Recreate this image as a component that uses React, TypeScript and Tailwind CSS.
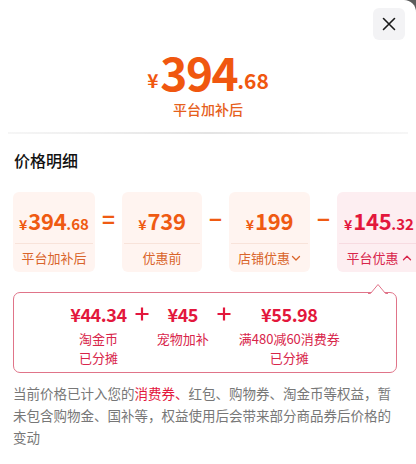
import React from "react";

const font = { fontFamily: '"Noto Sans CJK SC", "Noto Sans", sans-serif' };

function Chevron({ up, className }: { up?: boolean; className?: string }) {
  return (
    <svg viewBox="0 0 10 10" className={className} fill="none" stroke="currentColor" strokeWidth="1.3" strokeLinecap="round" strokeLinejoin="round">
      {up ? <path d="M1.5 6.8 5 3.3l3.5 3.5" /> : <path d="M1.5 3.5 5 7l3.5-3.5" />}
    </svg>
  );
}

interface CardProps {
  int: string;
  dec?: string;
  label: string;
  chevron?: "up" | "down";
  pink?: boolean;
  w: string;
}

function PriceCard({ int, dec, label, chevron, pink, w }: CardProps) {
  return (
    <div className={`${w} shrink-0 h-[80px] rounded-[6px] flex flex-col ${pink ? "bg-[#fdeef1] text-[#e3173c]" : "bg-[#fff4f0] text-[#ef5a12]"}`}>
      <div className="h-[51px] flex items-end justify-center pb-[12px] font-semibold leading-none">
        <span className="text-[14px] mr-[1px]">¥</span>
        <span className="text-[22px] tracking-[-0.3px]">{int}</span>
        {dec ? <span className="text-[15px]">.{dec}</span> : null}
      </div>
      <div className={`h-px mx-[2px] ${pink ? "bg-[#f7dbe1]" : "bg-[#f8e3da]"}`} />
      <div className={`flex-1 flex items-center justify-center text-[13px] ${pink ? "text-[#d8254a]" : "text-[#d9642a]"}`}>
        {label}
        {chevron === "down" ? <Chevron className="w-[10px] h-[10px] ml-[1px]" /> : null}
        {chevron === "up" ? <Chevron up className="w-[10px] h-[10px] ml-[3px]" /> : null}
      </div>
    </div>
  );
}

function Op({ children }: { children: React.ReactNode }) {
  return (
    <div className="w-[27px] shrink-0 flex items-center justify-center h-[51px] text-[#ef5a12] text-[22px] font-bold leading-none">
      {children}
    </div>
  );
}

function Plus() {
  return (
    <svg viewBox="0 0 14 14" className="w-[14px] h-[14px] mt-[5px] text-[#e3173c]" fill="none" stroke="currentColor" strokeWidth="2.2">
      <path d="M7 0.5v13M0.5 7h13" />
    </svg>
  );
}

function Part({ value, lines }: { value: string; lines: string[] }) {
  return (
    <div className="flex flex-col items-center">
      <div className="text-[18px] font-bold tracking-[-0.4px] leading-[24px] text-[#e3173c]">{value}</div>
      <div className="mt-[3px] flex flex-col items-center text-[13px] leading-[19px] text-[#d8254a]">
        {lines.map((l) => (
          <span key={l}>{l}</span>
        ))}
      </div>
    </div>
  );
}

export default function App() {
  return (
    <div className="w-[416px] h-[464px] overflow-hidden bg-[#5b5b5b]" style={font}>
      <div className="relative h-full bg-white rounded-tr-[12px]">
        <button className="absolute right-[11px] top-[8px] w-[32px] h-[32px] rounded-[6px] bg-[#f3f3f5] flex items-center justify-center text-[#1a1a1a]">
          <svg viewBox="0 0 16 16" className="w-[16px] h-[16px]" fill="none" stroke="currentColor" strokeWidth="1.6" strokeLinecap="round">
            <path d="M2.5 2.5l11 11M13.5 2.5l-11 11" />
          </svg>
        </button>

        <div className="h-[132px] flex flex-col items-center pt-[48px]">
          <div className="flex items-end text-[#f0570f] font-bold leading-none">
            <span className="text-[19px] mb-[5px] mr-[2px]">¥</span>
            <span className="text-[46px] tracking-[-1.5px]">394</span>
            <span className="text-[21px] mb-[3px] font-semibold">.68</span>
          </div>
          <div className="mt-[5px] text-[14px] font-medium text-[#e6601c]">平台加补后</div>
        </div>
        <div className="mx-[8px] h-[2px] bg-gradient-to-r from-[#f6f6f6] via-[#e4e4e4] to-[#f6f6f6]" />

        <div className="px-[14px] pt-[14px] text-[16px] font-medium text-[#111] leading-[24px]">价格明细</div>

        <div className="mt-[20px] pl-[13px] flex">
          <PriceCard w="w-[82px]" int="394" dec="68" label="平台加补后" />
          <Op>=</Op>
          <PriceCard w="w-[80px]" int="739" label="优惠前" />
          <Op>−</Op>
          <PriceCard w="w-[81px]" int="199" label="店铺优惠" chevron="down" />
          <Op>−</Op>
          <PriceCard w="w-[84px]" pink int="145" dec="32" label="平台优惠" chevron="up" />
        </div>

        <div className="relative mt-[20px] ml-[13px] w-[384px] h-[81px] rounded-[7px] border border-[#e07489] bg-white">
          <svg className="absolute -top-[10px] right-[8px] w-[20px] h-[11px]" viewBox="0 0 20 11" fill="none">
            <path d="M0 10.5h2.5L10 1.5l7.5 9H20" fill="white" stroke="#e07489" strokeWidth="1" />
          </svg>
          <div className="flex justify-center items-start gap-[8px] pt-[9px]">
            <Part value="¥44.34" lines={["淘金币", "已分摊"]} />
            <Plus />
            <Part value="¥45" lines={["宠物加补"]} />
            <Plus />
            <Part value="¥55.98" lines={["满480减60消费券", "已分摊"]} />
          </div>
        </div>

        <p className="mt-[9px] px-[13px] text-[13.5px] leading-[22px] text-[#777]">
          当前价格已计入您的<span className="text-[#e3173c]">消费券、</span>红包、购物券、淘金币等权益，暂未包含购物金、国补等，权益使用后会带来部分商品券后价格的变动
        </p>
      </div>
    </div>
  );
}
